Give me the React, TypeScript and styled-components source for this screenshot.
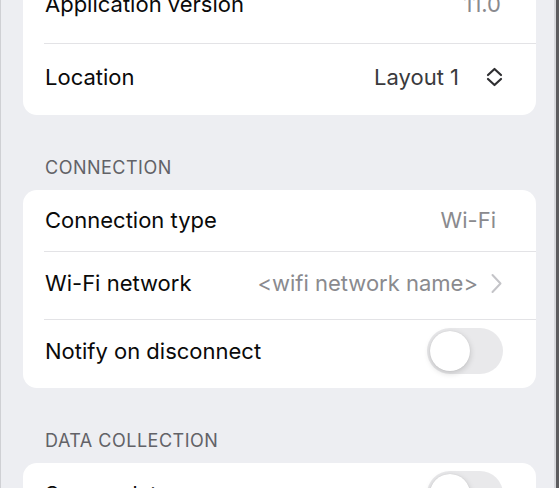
import styled, { createGlobalStyle } from "styled-components";

/*
global page reset
*/
const GlobalStyle = createGlobalStyle`
    html, body {
        margin: 0;
        padding: 0;
        background: #edeef2;
    }
    body {
        font-family: Inter, "Noto Sans", sans-serif;
        -webkit-font-smoothing: antialiased;
    }
`;

/*
lv 0 frame (window edges) -> content
*/
const Frame = styled.div`
    width: 559px;
    height: 488px;
    box-sizing: border-box;
    overflow: hidden;
    background: #edeef2;
    border-left: 1px solid #cfd0d4;
    border-right: 3px solid #5c5c5f;
    box-shadow: inset -2px 0 0 #d7d8dc;
`;

//scrolled list, top card is partly above the viewport
const Content = styled.main`
    display: flex;
    flex-direction: column;
    margin-top: -31px;
    padding: 0 20px 0 22px;
`;

/*
lv 1 section title, card
*/
const SectionTitle = styled.h2`
    margin: 0;
    padding: 42px 0 11px 22px;
    font-size: 18px;
    line-height: 22px;
    font-weight: 400;
    color: #626267;
    text-transform: uppercase;
    letter-spacing: 0.5px;
`;

const Card = styled.section`
    display: flex;
    flex-direction: column;
    background: #ffffff;
    border-radius: 14px;
    overflow: hidden;
`;

/*
lv 2 rows and dividers
*/
const Row = styled.div<{ $h: number; $pb?: number; $pr?: number }>`
    display: flex;
    align-items: center;
    justify-content: space-between;
    gap: 12px;
    box-sizing: border-box;
    height: ${(p) => p.$h}px;
    padding: 0 ${(p) => p.$pr ?? 33}px ${(p) => p.$pb ?? 0}px 22px;
`;

const Divider = styled.div`
    height: 1px;
    margin-left: 21px;
    background: #e3e3e6;
`;

/*
lv 3 label, value, trailing controls
*/
const Label = styled.span`
    font-size: 22px;
    color: #0a0a0a;
    white-space: nowrap;
`;

const Value = styled.span<{ $strong?: boolean }>`
    font-size: 22px;
    color: ${(p) => (p.$strong ? "#3a3a3d" : "#8a8a8e")};
    white-space: nowrap;
`;

const Trailing = styled.div<{ $gap: number }>`
    display: flex;
    align-items: center;
    gap: ${(p) => p.$gap}px;
`;

const Switch = styled.div<{ $on?: boolean }>`
    display: flex;
    align-items: center;
    justify-content: ${(p) => (p.$on ? "flex-end" : "flex-start")};
    flex-shrink: 0;
    box-sizing: border-box;
    width: 76px;
    height: 46px;
    padding: 0 3px;
    border-radius: 23px;
    background: ${(p) => (p.$on ? "#34c759" : "#e9e9eb")};
`;

const Knob = styled.div`
    width: 40px;
    height: 40px;
    border-radius: 50%;
    background: #ffffff;
    box-shadow: 0 2px 6px rgba(0, 0, 0, 0.18), 0 0 1px rgba(0, 0, 0, 0.12);
`;

const UpDownIcon = () => (
    <svg width="19" height="20" viewBox="0 0 19 20" fill="none">
        <path
            d="M3 8 L9.5 2 L16 8 M3 12 L9.5 18 L16 12"
            stroke="#2f2f32"
            strokeWidth="2.2"
            strokeLinecap="round"
            strokeLinejoin="round"
        />
    </svg>
);

const ChevronIcon = () => (
    <svg width="13" height="21" viewBox="0 0 13 21" fill="none">
        <path
            d="M2.5 2 L10.5 10.5 L2.5 19"
            stroke="#c4c4c8"
            strokeWidth="2"
            strokeLinecap="round"
            strokeLinejoin="round"
        />
    </svg>
);

const Toggle = ({ on }: { on?: boolean }) => (
    <Switch $on={on}>
        <Knob />
    </Switch>
);

export default function App() {
    return (
        <>
            <GlobalStyle />
            <Frame>
                <Content>
                    <Card>
                        <Row $h={74} $pb={4} $pr={35}>
                            <Label>Application version</Label>
                            <Value>11.0</Value>
                        </Row>
                        <Divider />
                        <Row $h={71} $pb={6} $pr={32}>
                            <Label>Location</Label>
                            <Trailing $gap={26}>
                                <Value $strong>Layout 1</Value>
                                <UpDownIcon />
                            </Trailing>
                        </Row>
                    </Card>

                    <SectionTitle>Connection</SectionTitle>
                    <Card>
                        <Row $h={61} $pb={2} $pr={40}>
                            <Label>Connection type</Label>
                            <Value>Wi-Fi</Value>
                        </Row>
                        <Divider />
                        <Row $h={67} $pb={5}>
                            <Label>Wi-Fi network</Label>
                            <Trailing $gap={12}>
                                <Value>&lt;wifi network name&gt;</Value>
                                <ChevronIcon />
                            </Trailing>
                        </Row>
                        <Divider />
                        <Row $h={68} $pb={6}>
                            <Label>Notify on disconnect</Label>
                            <Toggle />
                        </Row>
                    </Card>

                    <SectionTitle>Data collection</SectionTitle>
                    <Card>
                        <Row $h={68} $pb={6}>
                            <Label>Sensor data</Label>
                            <Toggle />
                        </Row>
                    </Card>
                </Content>
            </Frame>
        </>
    );
}
